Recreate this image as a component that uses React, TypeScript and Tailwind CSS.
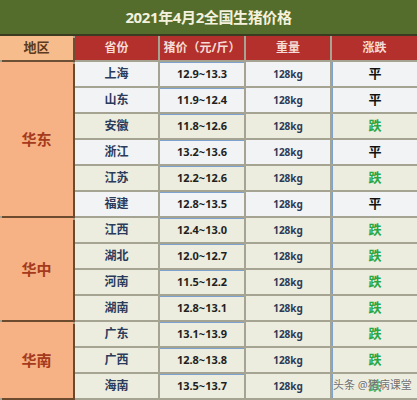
import React from "react";

type Row = { prov: string; price: string; trend: "平" | "跌" };

const regions: { name: string; rows: Row[] }[] = [
  {
    name: "华东",
    rows: [
      { prov: "上海", price: "12.9~13.3", trend: "平" },
      { prov: "山东", price: "11.9~12.4", trend: "平" },
      { prov: "安徽", price: "11.8~12.6", trend: "跌" },
      { prov: "浙江", price: "13.2~13.6", trend: "平" },
      { prov: "江苏", price: "12.2~12.6", trend: "跌" },
      { prov: "福建", price: "12.8~13.5", trend: "平" },
    ],
  },
  {
    name: "华中",
    rows: [
      { prov: "江西", price: "12.4~13.0", trend: "跌" },
      { prov: "湖北", price: "12.0~12.7", trend: "跌" },
      { prov: "河南", price: "11.5~12.2", trend: "跌" },
      { prov: "湖南", price: "12.8~13.1", trend: "跌" },
    ],
  },
  {
    name: "华南",
    rows: [
      { prov: "广东", price: "13.1~13.9", trend: "跌" },
      { prov: "广西", price: "12.8~13.8", trend: "跌" },
      { prov: "海南", price: "13.5~13.7", trend: "跌" },
    ],
  },
];

// rows that came out white-ish in the source, the rest are beige
const whiteRows = new Set(["上海", "山东", "浙江", "福建"]);

const spans: Record<number, string> = {
  6: "row-span-6",
  4: "row-span-4",
  3: "row-span-3",
};

const font = { fontFamily: '"Noto Sans", "Noto Sans CJK SC", sans-serif' };

export default function App() {
  return (
    <div className="relative w-[417px] h-[400px] overflow-hidden bg-[#a5a392]" style={font}>
      {/* title */}
      <div className="h-[36px] bg-[#546d2c] border-b-2 border-[#3b3b22] flex items-center justify-center">
        <h1 className="text-[15px] font-bold text-[#f4f1dc] tracking-tight">2021年4月2全国生猪价格</h1>
      </div>

      <div className="grid grid-cols-[73px_83px_84px_84px_85px] auto-rows-[24px] gap-[2px]">
        {/* header */}
        <div className="bg-[#f7bc8c] flex items-center justify-center text-[13px] font-bold text-[#5b3a1d] shadow-[2px_2px_0_#6b5036]">
          地区
        </div>
        {["省份", "猪价（元/斤）", "重量", "涨跌"].map((h) => (
          <div
            key={h}
            className="bg-[#b3302d] flex items-center justify-center text-[12px] font-bold text-[#f5dcd5] whitespace-nowrap"
          >
            {h}
          </div>
        ))}

        {regions.map((r) => (
          <React.Fragment key={r.name}>
            <div
              className={`col-start-1 ${spans[r.rows.length]} bg-[#f6b184] flex items-center justify-center text-[15px] font-bold text-[#a53a1c] shadow-[2px_2px_0_#6b4a2e]`}
            >
              {r.name}
            </div>
            {r.rows.map((row) => {
              const bg = whiteRows.has(row.prov) ? "bg-[#f2f3f5]" : "bg-[#ecedde]";
              return (
                <React.Fragment key={row.prov}>
                  <div className={`${bg} flex items-center justify-center text-[12px] font-bold text-[#2a3b5c]`}>
                    {row.prov}
                  </div>
                  <div
                    className={`${bg} border-t border-[#7ea2cf] flex items-center justify-center text-[11px] font-bold text-[#1f1f1f]`}
                  >
                    {row.price}
                  </div>
                  <div className={`${bg} flex items-center justify-center text-[10px] font-bold text-[#2d3a57]`}>
                    128kg
                  </div>
                  <div
                    className={`${bg} border-l border-[#7ea2cf] flex items-center justify-center text-[13px] font-bold ${
                      row.trend === "跌" ? "text-[#27a845]" : "text-[#111111]"
                    }`}
                  >
                    {row.trend}
                  </div>
                </React.Fragment>
              );
            })}
          </React.Fragment>
        ))}
      </div>

      {/* watermark */}
      <div className="absolute left-[333px] top-[377px] text-[11px] text-[#6f6f6f] whitespace-nowrap [text-shadow:0_0_2px_#ffffff]">
        头条 @猪病课堂
      </div>
    </div>
  );
}
